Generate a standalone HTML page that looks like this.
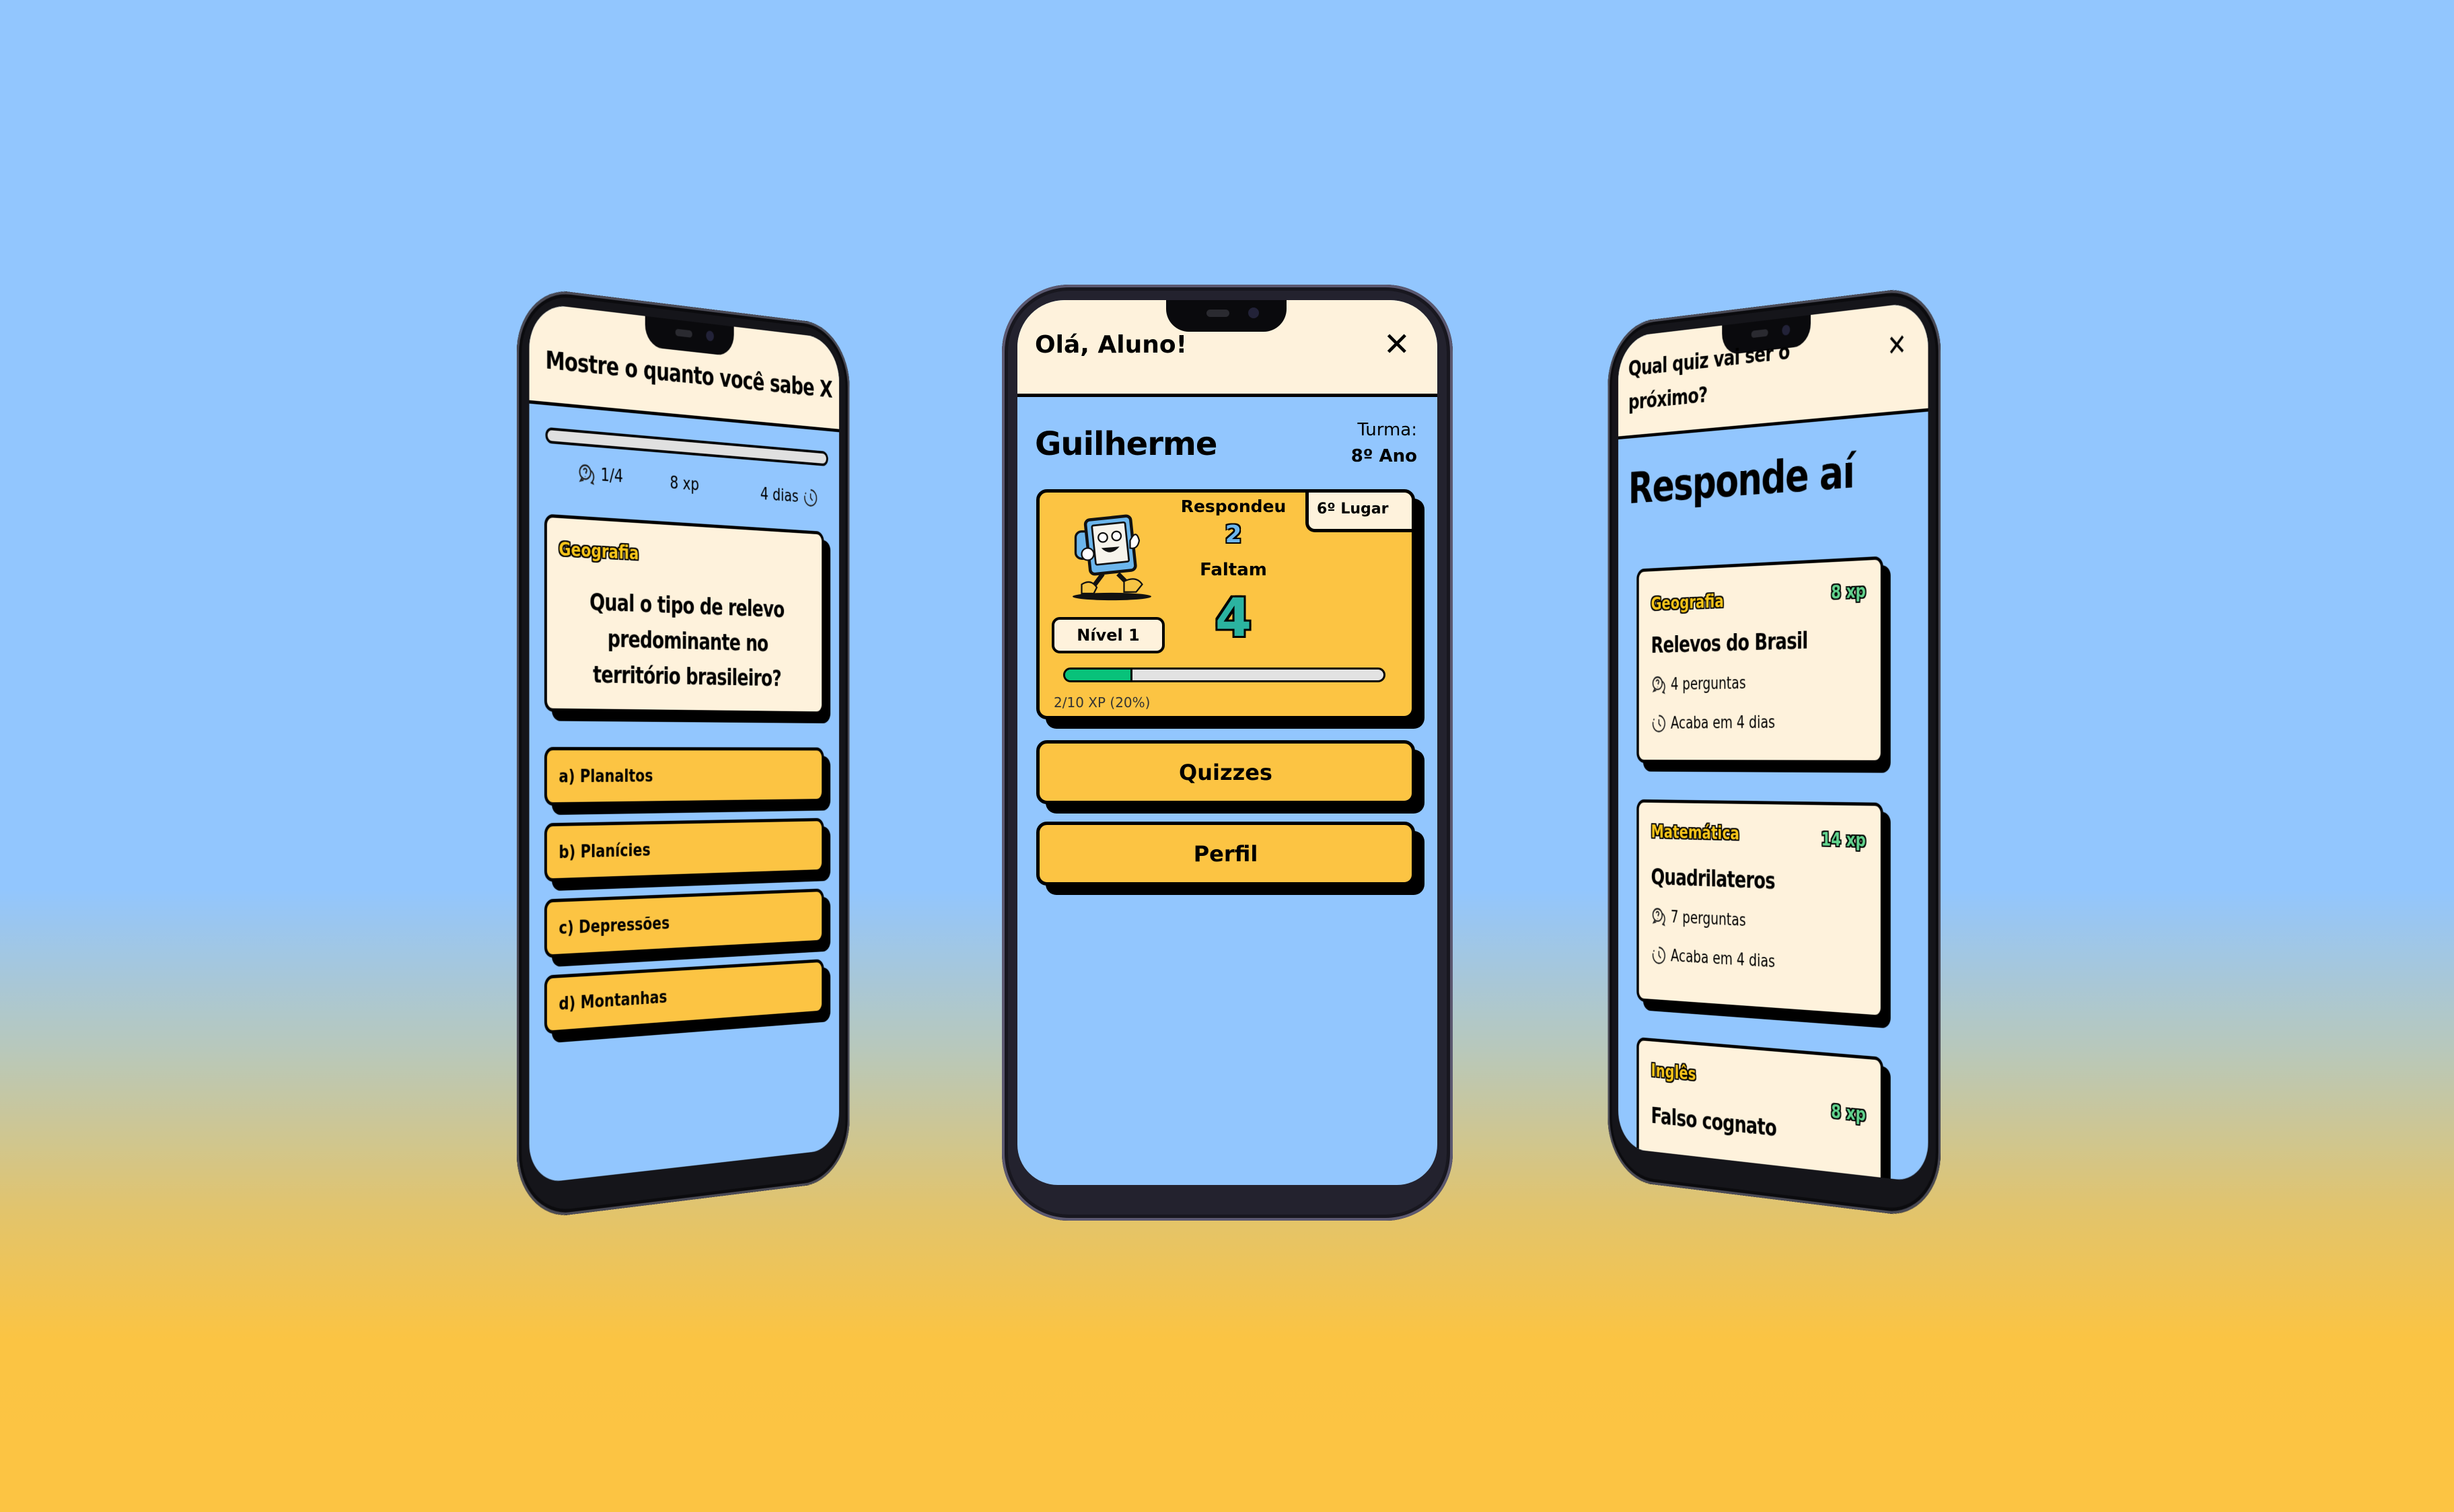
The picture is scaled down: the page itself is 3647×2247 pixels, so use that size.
<!DOCTYPE html>
<html><head><meta charset="utf-8">
<style>
*{box-sizing:border-box;margin:0;padding:0}
html,body{width:3647px;height:2247px;overflow:hidden}
body{position:relative;background:linear-gradient(to bottom,#92c6fe 0px,#92c6fe 1320px,#b8c8bb 1560px,#e2c46c 1800px,#fbc443 1990px,#fcc443 2247px);font-family:"DejaVu Sans","Liberation Sans",sans-serif}
.phone{position:absolute;width:670px;height:1391px;border-radius:100px;background:#15151a;box-shadow:inset 0 0 0 4px #4a4a55,inset 0 0 0 9px #0b0b0e}
.center{background:#23222e;box-shadow:inset 0 0 0 4px #5b5870,inset 0 0 0 9px #18171f}
.screen{position:absolute;left:23px;top:23px;width:624px;height:1315px;border-radius:70px 70px 60px 60px;background:#92c6fe;overflow:hidden}
.hdr{position:absolute;left:0;top:0;width:100%;background:#fef2dc;border-bottom:5px solid #000}
.notch{position:absolute;left:221px;top:0;width:179px;height:47px;background:#0a0a0d;border-radius:0 0 34px 34px}
.notch:before{content:"";position:absolute;left:60px;top:14px;width:34px;height:11px;border-radius:6px;background:#2a2a30}
.notch:after{content:"";position:absolute;left:122px;top:11px;width:16px;height:16px;border-radius:50%;background:#222238}
.abs{position:absolute;white-space:nowrap}
.b{font-weight:bold}
.card{position:absolute;border:5px solid #000;border-radius:16px;box-shadow:14px 14px 0 #000}
.y{background:#fcc443}.cr{background:#fef2dc}
.out{color:#f7c51a;text-shadow:-2px -2px 0 #000,2px -2px 0 #000,-2px 2px 0 #000,2px 2px 0 #000,0 2px 0 #000,0 -2px 0 #000,2px 0 0 #000,-2px 0 0 #000}
</style></head><body>

<!-- LEFT PHONE -->
<div class="phone" style="left:768px;top:424px;transform-origin:0 50%;transform:perspective(4100px) rotateY(36deg)">
 <div class="screen">
  <div class="hdr" style="height:151px"></div>
  <div class="notch"></div>
  <div class="abs b" style="left:30px;top:62px;font-size:37px;letter-spacing:-1px">Mostre o quanto você sabe X</div>
  <div class="abs" style="left:30px;top:184px;width:570px;height:24px;background:#e0e0e0;border:4px solid #000;border-radius:12px"></div>
  <div class="abs" style="left:90px;top:232px;font-size:27px">
   <svg width="36" height="36" viewBox="0 0 24 24" style="vertical-align:middle" fill="none" stroke="#222" stroke-width="1.6"><circle cx="10" cy="10" r="7"/><path d="M8 8a2 2 0 1 1 3 2v1.5M10 14v.5M6 16l-2 3 4-1M17 8a7 7 0 0 1 2 11l1 2-3-1"/></svg> 1/4</div>
  <div class="abs" style="left:270px;top:238px;font-size:27px">8 xp</div>
  <div class="abs" style="left:455px;top:244px;font-size:27px">4 dias <svg width="34" height="34" viewBox="0 0 24 24" style="vertical-align:middle" fill="none" stroke="#222" stroke-width="1.6"><path d="M12 3a9 9 0 1 1-9 9" /><path d="M3 12a9 9 0 0 1 2-5.5" stroke-dasharray="2 2"/><path d="M12 7v5l3 3"/></svg></div>
  <div class="card cr" style="left:28px;top:314px;width:563px;height:296px">
   <div class="abs b out" style="left:22px;top:30px;font-size:28px">Geografia</div>
   <div class="abs b" style="left:0;top:98px;width:100%;text-align:center;font-size:35px;line-height:55px;white-space:normal;letter-spacing:-1px">Qual o tipo de relevo<br>predominante no<br>território brasileiro?</div>
  </div>
  <div class="card y" style="left:28px;top:663px;width:563px;height:88px"><div class="abs b" style="left:22px;top:24px;font-size:27px">a) Planaltos</div></div>
  <div class="card y" style="left:28px;top:777px;width:563px;height:88px"><div class="abs b" style="left:22px;top:24px;font-size:27px">b) Planícies</div></div>
  <div class="card y" style="left:28px;top:891px;width:563px;height:88px"><div class="abs b" style="left:22px;top:24px;font-size:27px">c) Depressões</div></div>
  <div class="card y" style="left:28px;top:1005px;width:563px;height:88px"><div class="abs b" style="left:22px;top:24px;font-size:27px">d) Montanhas</div></div>
 </div>
</div>

<!-- CENTER PHONE -->
<div class="phone center" style="left:1489px;top:423px">
 <div class="screen">
  <div class="hdr" style="height:144px"></div>
  <div class="notch"></div>
  <div class="abs b" style="left:26px;top:46px;font-size:36px">Olá, Aluno!</div>
  <div class="abs b" style="right:40px;top:38px;font-size:48px">✕</div>
  <div class="abs b" style="left:26px;top:186px;font-size:48px;letter-spacing:-1px">Guilherme</div>
  <div class="abs" style="right:30px;top:178px;font-size:26px;text-align:right">Turma:</div>
  <div class="abs b" style="right:30px;top:217px;font-size:26px;text-align:right">8º Ano</div>
  <div class="card y" style="left:28px;top:281px;width:563px;height:342px;overflow:hidden">
   <div class="abs" style="left:395px;top:-5px;width:165px;height:64px;background:#fef2dc;border-left:5px solid #000;border-bottom:5px solid #000;border-radius:0 0 0 14px"></div>
   <div class="abs b" style="left:412px;top:12px;font-size:22px">6º Lugar</div>
   <svg class="abs" style="left:40px;top:30px" width="135" height="132" viewBox="0 0 60 58">
    <ellipse cx="30" cy="55" rx="26" ry="2.5" fill="#111"/>
    <rect x="6" y="12" width="10" height="18" rx="4" fill="#6cb6ec" stroke="#111" stroke-width="1.5"/>
    <rect x="14" y="3" width="30" height="36" rx="3" fill="#6cb6ec" stroke="#111" stroke-width="2" transform="rotate(-6 29 21)"/>
    <rect x="18" y="7" width="22" height="26" rx="1" fill="#f7f4ec" stroke="#111" stroke-width="1.2" transform="rotate(-6 29 20)"/>
    <circle cx="24" cy="16" r="3" fill="#fff" stroke="#111"/><circle cx="33" cy="15" r="3" fill="#fff" stroke="#111"/>
    <path d="M23 23q6 6 12-1z" fill="#111"/>
    <path d="M42 18q4-8 6 0-1 6-6 5z" fill="#fff" stroke="#111"/>
    <circle cx="14" cy="27" r="4" fill="#fff" stroke="#111"/>
    <path d="M24 40l-6 8M34 40l6 6" stroke="#111" stroke-width="3"/>
    <path d="M10 47q6-4 10 2l-2 4h-8z" fill="#f6c445" stroke="#111"/>
    <path d="M38 45q8-4 12 2l-4 5h-8z" fill="#f6c445" stroke="#111"/>
   </svg>
   <div class="abs b" style="left:188px;top:6px;width:200px;text-align:center;font-size:25px">Respondeu</div>
   <div class="abs b" style="left:188px;top:42px;width:200px;text-align:center;font-size:36px;color:#6cb6ec;text-shadow:-2px -2px 0 #000,2px -2px 0 #000,-2px 2px 0 #000,2px 2px 0 #000">2</div>
   <div class="abs b" style="left:188px;top:100px;width:200px;text-align:center;font-size:26px">Faltam</div>
   <div class="abs b" style="left:188px;top:142px;width:200px;text-align:center;font-size:78px;color:#2bb3a0;text-shadow:-3px -3px 0 #000,3px -3px 0 #000,-3px 3px 0 #000,3px 3px 0 #000">4</div>
   <div class="abs b" style="left:18px;top:185px;width:168px;height:54px;background:#fef2dc;border:4px solid #000;border-radius:12px;text-align:center;font-size:24px;line-height:46px">Nível 1</div>
   <div class="abs" style="left:35px;top:260px;width:479px;height:22px;background:#e2e2e2;border:3px solid #000;border-radius:11px;overflow:hidden"><div style="width:100px;height:100%;background:#08c27a;border-right:3px solid #000"></div></div>
   <div class="abs" style="left:21px;top:300px;font-size:20px;color:#333">2/10 XP (20%)</div>
  </div>
  <div class="card y" style="left:28px;top:654px;width:563px;height:95px"><div class="abs b" style="left:0;width:100%;text-align:center;top:24px;font-size:32px">Quizzes</div></div>
  <div class="card y" style="left:28px;top:775px;width:563px;height:95px"><div class="abs b" style="left:0;width:100%;text-align:center;top:24px;font-size:32px">Perfil</div></div>
 </div>
</div>

<!-- RIGHT PHONE -->
<div class="phone" style="left:2214px;top:422px;transform-origin:100% 50%;transform:perspective(4100px) rotateY(-36deg)">
 <div class="screen">
  <div class="hdr" style="height:165px"></div>
  <div class="notch"></div>
  <div class="abs b" style="left:22px;top:26px;font-size:34px;line-height:54px;letter-spacing:-1px">Qual quiz vai ser o<br>próximo?</div>
  <div class="abs b" style="right:40px;top:36px;font-size:44px">✕</div>
  <div class="abs b" style="left:22px;top:205px;font-size:70px;letter-spacing:-2px">Responde aí</div>
  <div class="card cr" style="left:40px;top:377px;width:500px;height:313px">
   <div class="abs b out" style="left:26px;top:36px;font-size:28px">Geografia</div>
   <div class="abs b out" style="right:28px;top:30px;font-size:28px;color:#62d48e">8 xp</div>
   <div class="abs b" style="left:26px;top:100px;font-size:35px;letter-spacing:-1px">Relevos do Brasil</div>
   <div class="abs" style="left:26px;top:166px;font-size:26px">
    <svg width="34" height="34" viewBox="0 0 24 24" style="vertical-align:middle" fill="none" stroke="#222" stroke-width="1.6"><circle cx="10" cy="10" r="7"/><path d="M8 8a2 2 0 1 1 3 2v1.5M10 14v.5M6 16l-2 3 4-1M17 8a7 7 0 0 1 2 11l1 2-3-1"/></svg>&nbsp;4 perguntas</div>
   <div class="abs" style="left:26px;top:228px;font-size:26px">
    <svg width="34" height="34" viewBox="0 0 24 24" style="vertical-align:middle" fill="none" stroke="#222" stroke-width="1.6"><path d="M12 3a9 9 0 1 1-9 9"/><path d="M3 12a9 9 0 0 1 2-5.5" stroke-dasharray="2 2"/><path d="M12 7v5l3 3"/></svg>&nbsp;Acaba em 4 dias</div>
  </div>
  <div class="card cr" style="left:40px;top:749px;width:500px;height:326px">
   <div class="abs b out" style="left:26px;top:30px;font-size:28px">Matemática</div>
   <div class="abs b out" style="right:28px;top:36px;font-size:28px;color:#62d48e">14 xp</div>
   <div class="abs b" style="left:26px;top:100px;font-size:35px;letter-spacing:-1px">Quadrilateros</div>
   <div class="abs" style="left:26px;top:166px;font-size:26px">
    <svg width="34" height="34" viewBox="0 0 24 24" style="vertical-align:middle" fill="none" stroke="#222" stroke-width="1.6"><circle cx="10" cy="10" r="7"/><path d="M8 8a2 2 0 1 1 3 2v1.5M10 14v.5M6 16l-2 3 4-1M17 8a7 7 0 0 1 2 11l1 2-3-1"/></svg>&nbsp;7 perguntas</div>
   <div class="abs" style="left:26px;top:228px;font-size:26px">
    <svg width="34" height="34" viewBox="0 0 24 24" style="vertical-align:middle" fill="none" stroke="#222" stroke-width="1.6"><path d="M12 3a9 9 0 1 1-9 9"/><path d="M3 12a9 9 0 0 1 2-5.5" stroke-dasharray="2 2"/><path d="M12 7v5l3 3"/></svg>&nbsp;Acaba em 4 dias</div>
  </div>
  <div class="card cr" style="left:40px;top:1133px;width:500px;height:326px">
   <div class="abs b out" style="left:26px;top:30px;font-size:28px">Inglês</div>
   <div class="abs b out" style="right:28px;top:68px;font-size:28px;color:#62d48e">8 xp</div>
   <div class="abs b" style="left:26px;top:100px;font-size:35px;letter-spacing:-1px">Falso cognato</div>
  </div>
 </div>
</div>
</body></html>
